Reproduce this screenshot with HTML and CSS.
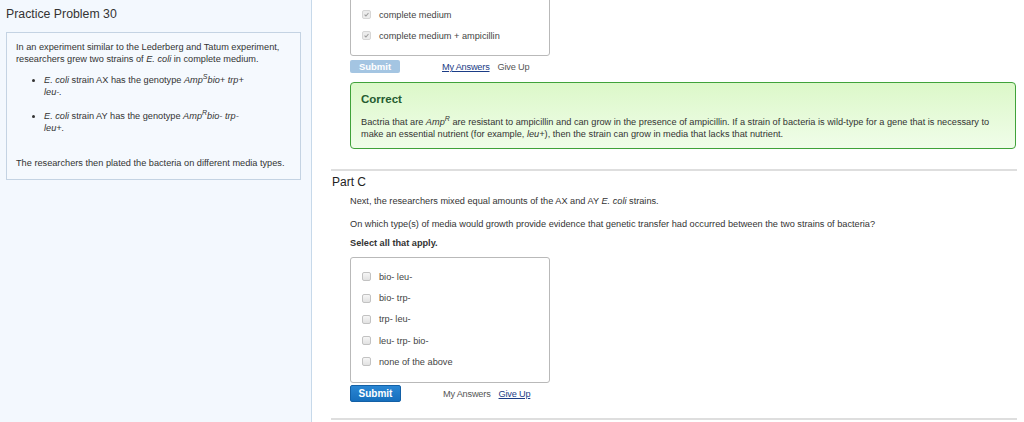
FILE: index.html
```html
<!DOCTYPE html>
<html>
<head>
<meta charset="utf-8">
<title>Practice Problem 30</title>
<link rel="stylesheet" href="styles.css">
</head>
<body>
<div class="page">
  <aside class="sidebar">
    <h1 class="title">Practice Problem 30</h1>
    <div class="intro">
      <p>In an experiment similar to the Lederberg and Tatum experiment, researchers grew two strains of <i>E. coli</i> in complete medium.</p>
      <ul class="strains">
        <li><i>E. coli</i> strain AX has the genotype <i>Amp<sup>S</sup>bio+ trp+ leu-.</i></li>
        <li><i>E. coli</i> strain AY has the genotype <i>Amp<sup>R</sup>bio- trp- leu+.</i></li>
      </ul>
      <p class="last">The researchers then plated the bacteria on different media types.</p>
    </div>
  </aside>
  <main class="content">
    <div class="part">
      <div class="options options-top">
        <div class="opt"><span class="cb cb-checked"><svg viewBox="0 0 9 9" width="9" height="9"><path d="M2 4.6 L3.8 6.4 L7 2.6" fill="none" stroke="#9a9a9a" stroke-width="1.3"/></svg></span><span>complete medium</span></div>
        <div class="opt"><span class="cb cb-checked"><svg viewBox="0 0 9 9" width="9" height="9"><path d="M2 4.6 L3.8 6.4 L7 2.6" fill="none" stroke="#9a9a9a" stroke-width="1.3"/></svg></span><span>complete medium + ampicillin</span></div>
      </div>
      <div class="actions actions-top">
        <span class="btn btn-disabled">Submit</span>
        <span class="links"><a class="link-strong">My Answers</a><span class="link-plain">Give Up</span></span>
      </div>
      <div class="feedback">
        <div class="fb-title">Correct</div>
        <p class="fb-text">Bactria that are <i>Amp<sup>R</sup></i> are resistant to ampicillin and can grow in the presence of ampicillin. If a strain of bacteria is wild-type for a gene that is necessary to make an essential nutrient (for example, <i>leu+</i>), then the strain can grow in media that lacks that nutrient.</p>
      </div>
    </div>
    <hr class="rule rule-top">
    <h2 class="part-title">Part C</h2>
    <div class="part">
      <p class="q q-intro">Next, the researchers mixed equal amounts of the AX and AY <i>E. coli</i> strains.</p>
      <p class="q q-main">On which type(s) of media would growth provide evidence that genetic transfer had occurred between the two strains of bacteria?</p>
      <p class="q q-hint">Select all that apply.</p>
      <div class="options options-bottom">
        <div class="opt"><span class="cb"></span><span>bio- leu-</span></div>
        <div class="opt"><span class="cb"></span><span>bio- trp-</span></div>
        <div class="opt"><span class="cb"></span><span>trp- leu-</span></div>
        <div class="opt"><span class="cb"></span><span>leu- trp- bio-</span></div>
        <div class="opt"><span class="cb"></span><span>none of the above</span></div>
      </div>
      <div class="actions actions-bottom">
        <span class="btn btn-primary">Submit</span>
        <span class="links"><span class="link-plain">My Answers</span><a class="link-strong">Give Up</a></span>
      </div>
    </div>
    <hr class="rule rule-bottom">
  </main>
</div>
</body>
</html>
```
FILE: styles.css
```css
html, body {
  margin: 0;
  padding: 0;
  background: #ffffff;
}
body {
  font-family: "Liberation Sans", Arial, sans-serif;
  color: #333333;
  font-size: 9.2px;
  line-height: 12px;
}
.page {
  display: flex;
  height: 422px;
  overflow: hidden;
}
.sidebar {
  width: 305px;
  flex: none;
  background: #f3f8fe;
  border-right: 1px solid #c7d9ea;
  padding: 0 0 0 6px;
}
.title {
  margin: 6px 0 10px 0;
  font-size: 12.3px;
  line-height: 16px;
  font-weight: normal;
  color: #333333;
}
.intro {
  width: 283px;
  border: 1px solid #c4d3e3;
  background: #f5f9fe;
  padding: 8px 1px 10px 9px;
}
.intro p {
  margin: 0;
}
.strains {
  margin: 9px 0 0 0;
  padding: 0 0 0 28px;
  list-style: disc;
}
.strains li {
  width: 214px;
  margin-bottom: 12px;
}
.intro .last {
  margin-top: 23px;
}
sup {
  font-size: 7px;
  line-height: 0;
  vertical-align: 4px;
}
.content {
  flex: 1;
  padding: 0 7px 0 19px;
  min-width: 0;
}
.part {
  padding-left: 19px;
}
.options {
  width: 187px;
  border: 1px solid #b9b9b9;
  border-radius: 3px;
  padding: 8px 0 9px 11px;
  background: #ffffff;
}
.options-top {
  margin-top: -5px;
}
.options-bottom {
  margin-top: 8px;
  padding-top: 8px;
  padding-bottom: 10px;
}
.opt {
  display: flex;
  align-items: center;
  height: 21.2px;
  color: #444444;
}
.cb {
  width: 7px;
  height: 7px;
  border: 1px solid #c2c2c2;
  border-radius: 2px;
  background: linear-gradient(#f6f6f6, #e2e2e2);
  margin-right: 8px;
  flex: none;
  display: flex;
  align-items: center;
  justify-content: center;
}
.cb-checked {
  border-color: #d6d6d6;
  background: #ececec;
}
.cb-checked svg {
  display: block;
}
.actions {
  display: flex;
  align-items: center;
}
.actions-top {
  margin-top: 4px;
  height: 13px;
}
.actions-bottom {
  margin-top: 2px;
  height: 17px;
}
.btn {
  display: flex;
  align-items: center;
  justify-content: center;
  color: #ffffff;
  font-weight: bold;
  box-sizing: border-box;
}
.btn-disabled {
  width: 50px;
  height: 13px;
  background: #a4c5e2;
  border-radius: 2px;
  font-size: 9.5px;
}
.btn-primary {
  width: 51px;
  height: 17px;
  background: linear-gradient(#2a86d3, #166fbd);
  border: 1px solid #1360a6;
  border-radius: 2px;
  font-size: 10px;
}
.links {
  display: flex;
  gap: 8px;
  margin-left: 42px;
}
.link-strong {
  color: #1b3c86;
  text-decoration: underline;
  letter-spacing: -0.2px;
}
.link-plain {
  color: #555555;
  letter-spacing: -0.2px;
}
.feedback {
  margin-top: 9px;
  margin-right: 1px;
  border: 1px solid #40a23a;
  border-radius: 4px;
  background: linear-gradient(#dcf8c9, #f0fde9);
  padding: 9px 18px 8px 10px;
}
.fb-title {
  font-size: 11.5px;
  line-height: 14px;
  font-weight: bold;
  color: #255c30;
}
.fb-text {
  margin: 10px 0 0 0;
  color: #333333;
}
.rule {
  border: 0;
  height: 2px;
  background: #dedede;
  margin: 0;
}
.rule-top {
  margin-top: 20px;
}
.rule-bottom {
  margin-top: 16px;
}
.part-title {
  margin: 4px 0 6px 1px;
  font-size: 12px;
  line-height: 14px;
  font-weight: normal;
  color: #222222;
}
.q {
  margin: 0;
}
.q-main {
  margin-top: 11px;
}
.q-hint {
  margin-top: 7px;
  font-weight: bold;
  color: #333333;
}
```
